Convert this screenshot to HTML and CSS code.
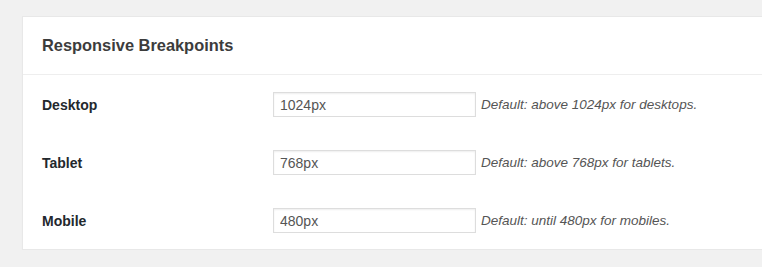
FILE: index.html
```html
<!DOCTYPE html>
<html lang="en">
<head>
    <meta charset="UTF-8">
    <title>Responsive Breakpoints</title>
    <link rel="stylesheet" href="styles.css">
</head>
<body>
    <!-- Settings panel -->
    <div class="panel">
        <div class="panel-header">
            <h2>Responsive Breakpoints</h2>
        </div>
        <div class="panel-body">
            <div class="field-row">
                <label class="field-label" for="bp-desktop">Desktop</label>
                <input class="field-input" type="text" id="bp-desktop" value="1024px">
                <span class="field-desc">Default: above 1024px for desktops.</span>
            </div>
            <div class="field-row">
                <label class="field-label" for="bp-tablet">Tablet</label>
                <input class="field-input" type="text" id="bp-tablet" value="768px">
                <span class="field-desc">Default: above 768px for tablets.</span>
            </div>
            <div class="field-row">
                <label class="field-label" for="bp-mobile">Mobile</label>
                <input class="field-input" type="text" id="bp-mobile" value="480px">
                <span class="field-desc">Default: until 480px for mobiles.</span>
            </div>
        </div>
    </div>
</body>
</html>
```

FILE: styles.css
```css
/* Grey admin background */
body {
    margin: 0;
    padding: 16px 0 0 22px;
    background-color: #f1f1f1;
    font-family: "Liberation Sans", Arial, sans-serif;
    color: #23282d;
}

/* White box, open on the right where the page is cut */
.panel {
    background-color: #fff;
    border: 1px solid #e8e8e8;
    border-right: none;
    box-shadow: 0 1px 1px rgba(0, 0, 0, 0.04);
}

.panel-header {
    height: 57px;
    display: flex;
    align-items: center;
    padding: 0 19px;
    border-bottom: 1px solid #eee;
}

.panel-header h2 {
    margin: 0;
    font-size: 16.4px;
    font-weight: bold;
    color: #3c3c3c;
}

.panel-body {
    padding: 17px 19px 16px;
    display: flex;
    flex-direction: column;
    gap: 33px;
}

.field-row {
    display: flex;
    align-items: center;
    height: 25px;
}

.field-label {
    width: 231px;
    font-size: 14px;
    font-weight: bold;
    color: #23282d;
}

.field-input {
    box-sizing: border-box;
    width: 203px;
    height: 25px;
    margin: 0;
    padding: 0 6px;
    border: 1px solid #ddd;
    box-shadow: inset 0 1px 2px rgba(0, 0, 0, 0.07);
    font-family: "Liberation Sans", Arial, sans-serif;
    font-size: 14px;
    color: #555;
    background-color: #fff;
    outline: none;
}

.field-desc {
    margin-left: 5px;
    font-size: 13.5px;
    font-style: italic;
    color: #555;
}
```
